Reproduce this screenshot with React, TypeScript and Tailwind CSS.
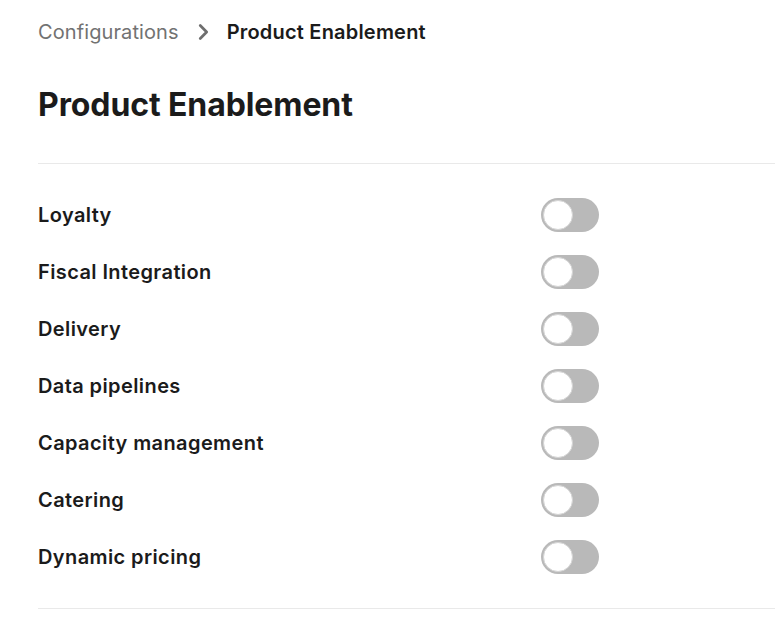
import React, { useState } from "react";

const products = [
  "Loyalty",
  "Fiscal Integration",
  "Delivery",
  "Data pipelines",
  "Capacity management",
  "Catering",
  "Dynamic pricing",
];

function Toggle({ checked, onChange }: { checked: boolean; onChange: (v: boolean) => void }) {
  return (
    <button
      type="button"
      role="switch"
      aria-checked={checked}
      onClick={() => onChange(!checked)}
      className={`relative h-[34px] w-[58px] rounded-full transition-colors ${
        checked ? "bg-[#1a1a1a]" : "bg-[#b9b9b9]"
      }`}
    >
      <span
        className={`absolute top-[2px] h-[30px] w-[30px] rounded-full border border-[#d4d4d4] bg-white transition-all ${
          checked ? "left-[26px]" : "left-[2px]"
        }`}
      />
    </button>
  );
}

export default function App() {
  const [enabled, setEnabled] = useState<Record<string, boolean>>({});

  return (
    <div className="min-h-screen bg-white pl-[38px] pt-[18px] text-[#1b1b1b] [font-family:Inter,'Noto_Sans',sans-serif]">
      <nav className="flex items-center text-[20px] leading-7">
        <span className="tracking-[0.1px] text-[#727272]">Configurations</span>
        <svg
          viewBox="0 0 24 24"
          className="mx-[13px] h-[22px] w-[22px] text-[#6e6e6e]"
          fill="none"
          stroke="currentColor"
          strokeWidth={3}
          strokeLinecap="round"
          strokeLinejoin="round"
        >
          <path d="M9 5l7 7-7 7" />
        </svg>
        <span className="font-semibold tracking-[0.2px]">Product Enablement</span>
      </nav>

      <h1 className="mt-[39px] text-[32px] font-bold leading-10 tracking-[-0.1px]">Product Enablement</h1>

      <div className="mt-[38px] border-t border-[#e9e9e9] pb-[23px] pt-[22px]">
        {products.map((name) => (
          <div key={name} className="flex h-[57px] items-center">
            <span className="w-[503px] text-[20px] font-semibold tracking-[0.4px]">{name}</span>
            <Toggle
              checked={!!enabled[name]}
              onChange={(v) => setEnabled((s) => ({ ...s, [name]: v }))}
            />
          </div>
        ))}
      </div>
      <div className="border-t border-[#e9e9e9]" />
    </div>
  );
}
